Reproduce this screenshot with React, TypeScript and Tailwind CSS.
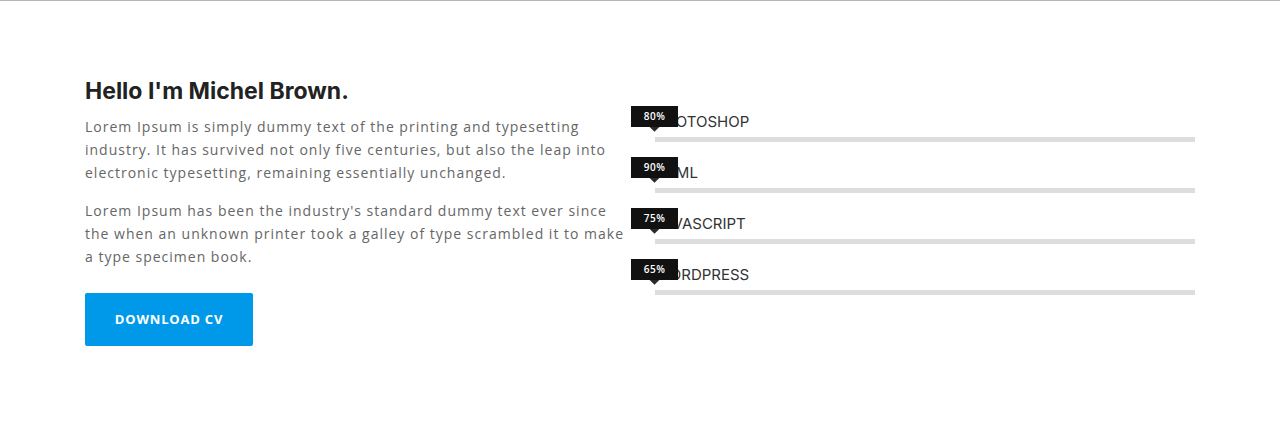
import React from "react";

const skills = [
  { name: "PHOTOSHOP", pct: 80 },
  { name: "HTML", pct: 90 },
  { name: "JAVASCRIPT", pct: 75 },
  { name: "WORDPRESS", pct: 65 },
];

export default function App() {
  return (
    <div className="w-full min-h-[425px] bg-white border-t border-[#b5b5b5]">
      <div className="mx-auto w-[1140px] flex pt-[76px]">
        <div className="w-[570px] px-[15px]">
          <h2 className="font-['Inter',sans-serif] font-bold text-[23px] leading-[28px] text-[#222]">
            Hello I'm Michel Brown.
          </h2>
          <div className="mt-[10px] font-['Open_Sans',sans-serif] text-[14px] leading-[23px] text-[#666] tracking-[1px]">
            <p>
              Lorem Ipsum is simply dummy text of the printing and typesetting industry. It has survived not only five
              centuries, but also the leap into electronic typesetting, remaining essentially unchanged.
            </p>
            <p className="mt-[15px]">
              Lorem Ipsum has been the industry's standard dummy text ever since the when an unknown printer took a
              galley of type scrambled it to make a type specimen book.
            </p>
          </div>
          <button className="mt-[25px] w-[168px] h-[53px] bg-[#0099ea] rounded-[2px] text-white font-['Open_Sans',sans-serif] font-bold text-[13px] tracking-[0.8px]">
            DOWNLOAD CV
          </button>
        </div>
        <div className="w-[570px] px-[15px] pt-[34px]">
          {skills.map((s) => (
            <div key={s.name} className="relative mb-[20px]">
              <div className="font-['Inter',sans-serif] text-[15px] leading-[21px] text-[#333]">{s.name}</div>
              <div className="mt-[5px] h-[5px] bg-[#dddddd]" />
              <div className="absolute left-[-24px] top-[-5px] w-[47px] h-[21px]">
                <div className="absolute left-[19px] top-[15px] w-[9px] h-[9px] rotate-45 bg-[#2a2a2a]" />
                <div className="absolute inset-0 bg-[#111] flex items-center justify-center font-['Open_Sans',sans-serif] font-semibold text-[10px] text-white tracking-[0.5px]">
                  {s.pct}%
                </div>
              </div>
            </div>
          ))}
        </div>
      </div>
    </div>
  );
}
